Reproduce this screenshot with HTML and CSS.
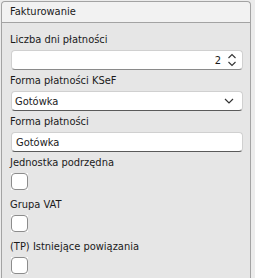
FILE: index.html
```html
<!DOCTYPE html>
<html lang="pl">
<head>
<meta charset="UTF-8">
<title>Fakturowanie</title>
<link rel="stylesheet" href="styles.css">
</head>
<body>
<div class="panel">
    <div class="panel-head">Fakturowanie</div>
    <div class="panel-body">
        <div class="field">
            <div class="label">Liczba dni płatności</div>
            <div class="control spin">
                <span class="value">2</span>
                <svg class="spin-arrows" width="10" height="14" viewBox="0 0 10 14">
                    <path d="M1.5 5 L5 1.5 L8.5 5" fill="none" stroke="#333" stroke-width="1.1"/>
                    <path d="M1.5 9 L5 12.5 L8.5 9" fill="none" stroke="#333" stroke-width="1.1"/>
                </svg>
            </div>
        </div>
        <div class="field">
            <div class="label">Forma płatności KSeF</div>
            <div class="control select">
                <span>Gotówka</span>
                <svg class="caret" width="10" height="6" viewBox="0 0 10 6">
                    <path d="M1 1 L5 5 L9 1" fill="none" stroke="#333" stroke-width="1.2"/>
                </svg>
            </div>
        </div>
        <div class="field">
            <div class="label">Forma płatności</div>
            <div class="control text">Gotówka</div>
        </div>
        <div class="field check-field">
            <div class="label">Jednostka podrzędna</div>
            <div class="check"><span></span></div>
        </div>
        <div class="field check-field">
            <div class="label">Grupa VAT</div>
            <div class="check"><span></span></div>
        </div>
        <div class="field check-field">
            <div class="label">(TP) Istniejące powiązania</div>
            <div class="check"><span></span></div>
        </div>
    </div>
</div>
</body>
</html>
```

FILE: styles.css
```css
body {
    margin: 0;
    background: #ececec;
    font-family: "DejaVu Sans Condensed", "Liberation Sans", sans-serif;
    font-stretch: condensed;
    font-size: 11px;
    color: #1a1a1a;
}
.panel {
    margin: 1px 0 0 1px;
    width: 248px;
    height: 300px;
    border: 1px solid #a3a3a3;
    border-bottom: none;
    border-radius: 4px 4px 0 0;
    background: #e6e6e6;
}
.panel-head {
    height: 20px;
    line-height: 20px;
    padding-left: 8px;
    background: #f2f2f2;
    border-bottom: 1px solid #a3a3a3;
    border-radius: 4px 4px 0 0;
}
.panel-body {
    padding: 9px 7px 0 8px;
}
.field {
    margin-bottom: 3px;
}
.label {
    height: 16px;
    line-height: 16px;
    margin-bottom: 2px;
}
.control {
    box-sizing: border-box;
    height: 20px;
    display: flex;
    align-items: center;
    padding: 0 6px;
    background: #fff;
    border: 1px solid #d0d0d0;
    border-bottom-color: #8a8a8a;
    border-radius: 4px;
}
.field .control,
.field .check {
    margin-left: 1px;
}
.spin {
    justify-content: flex-end;
    padding-right: 5px;
}
.spin .value {
    margin-right: 6px;
}
.select {
    justify-content: space-between;
    padding-left: 3px;
    padding-right: 8px;
    border-bottom-color: #5a5a5a;
}
.text {
    padding-left: 4px;
    border-bottom-color: #5a5a5a;
}
.check-field {
    margin-bottom: 7px;
}
.check {
    width: 17px;
    height: 17px;
    background: #fff;
}
.check span {
    display: block;
    box-sizing: border-box;
    width: 17px;
    height: 17px;
    border: 1px solid #8c8c8c;
    border-radius: 4px;
}
```
